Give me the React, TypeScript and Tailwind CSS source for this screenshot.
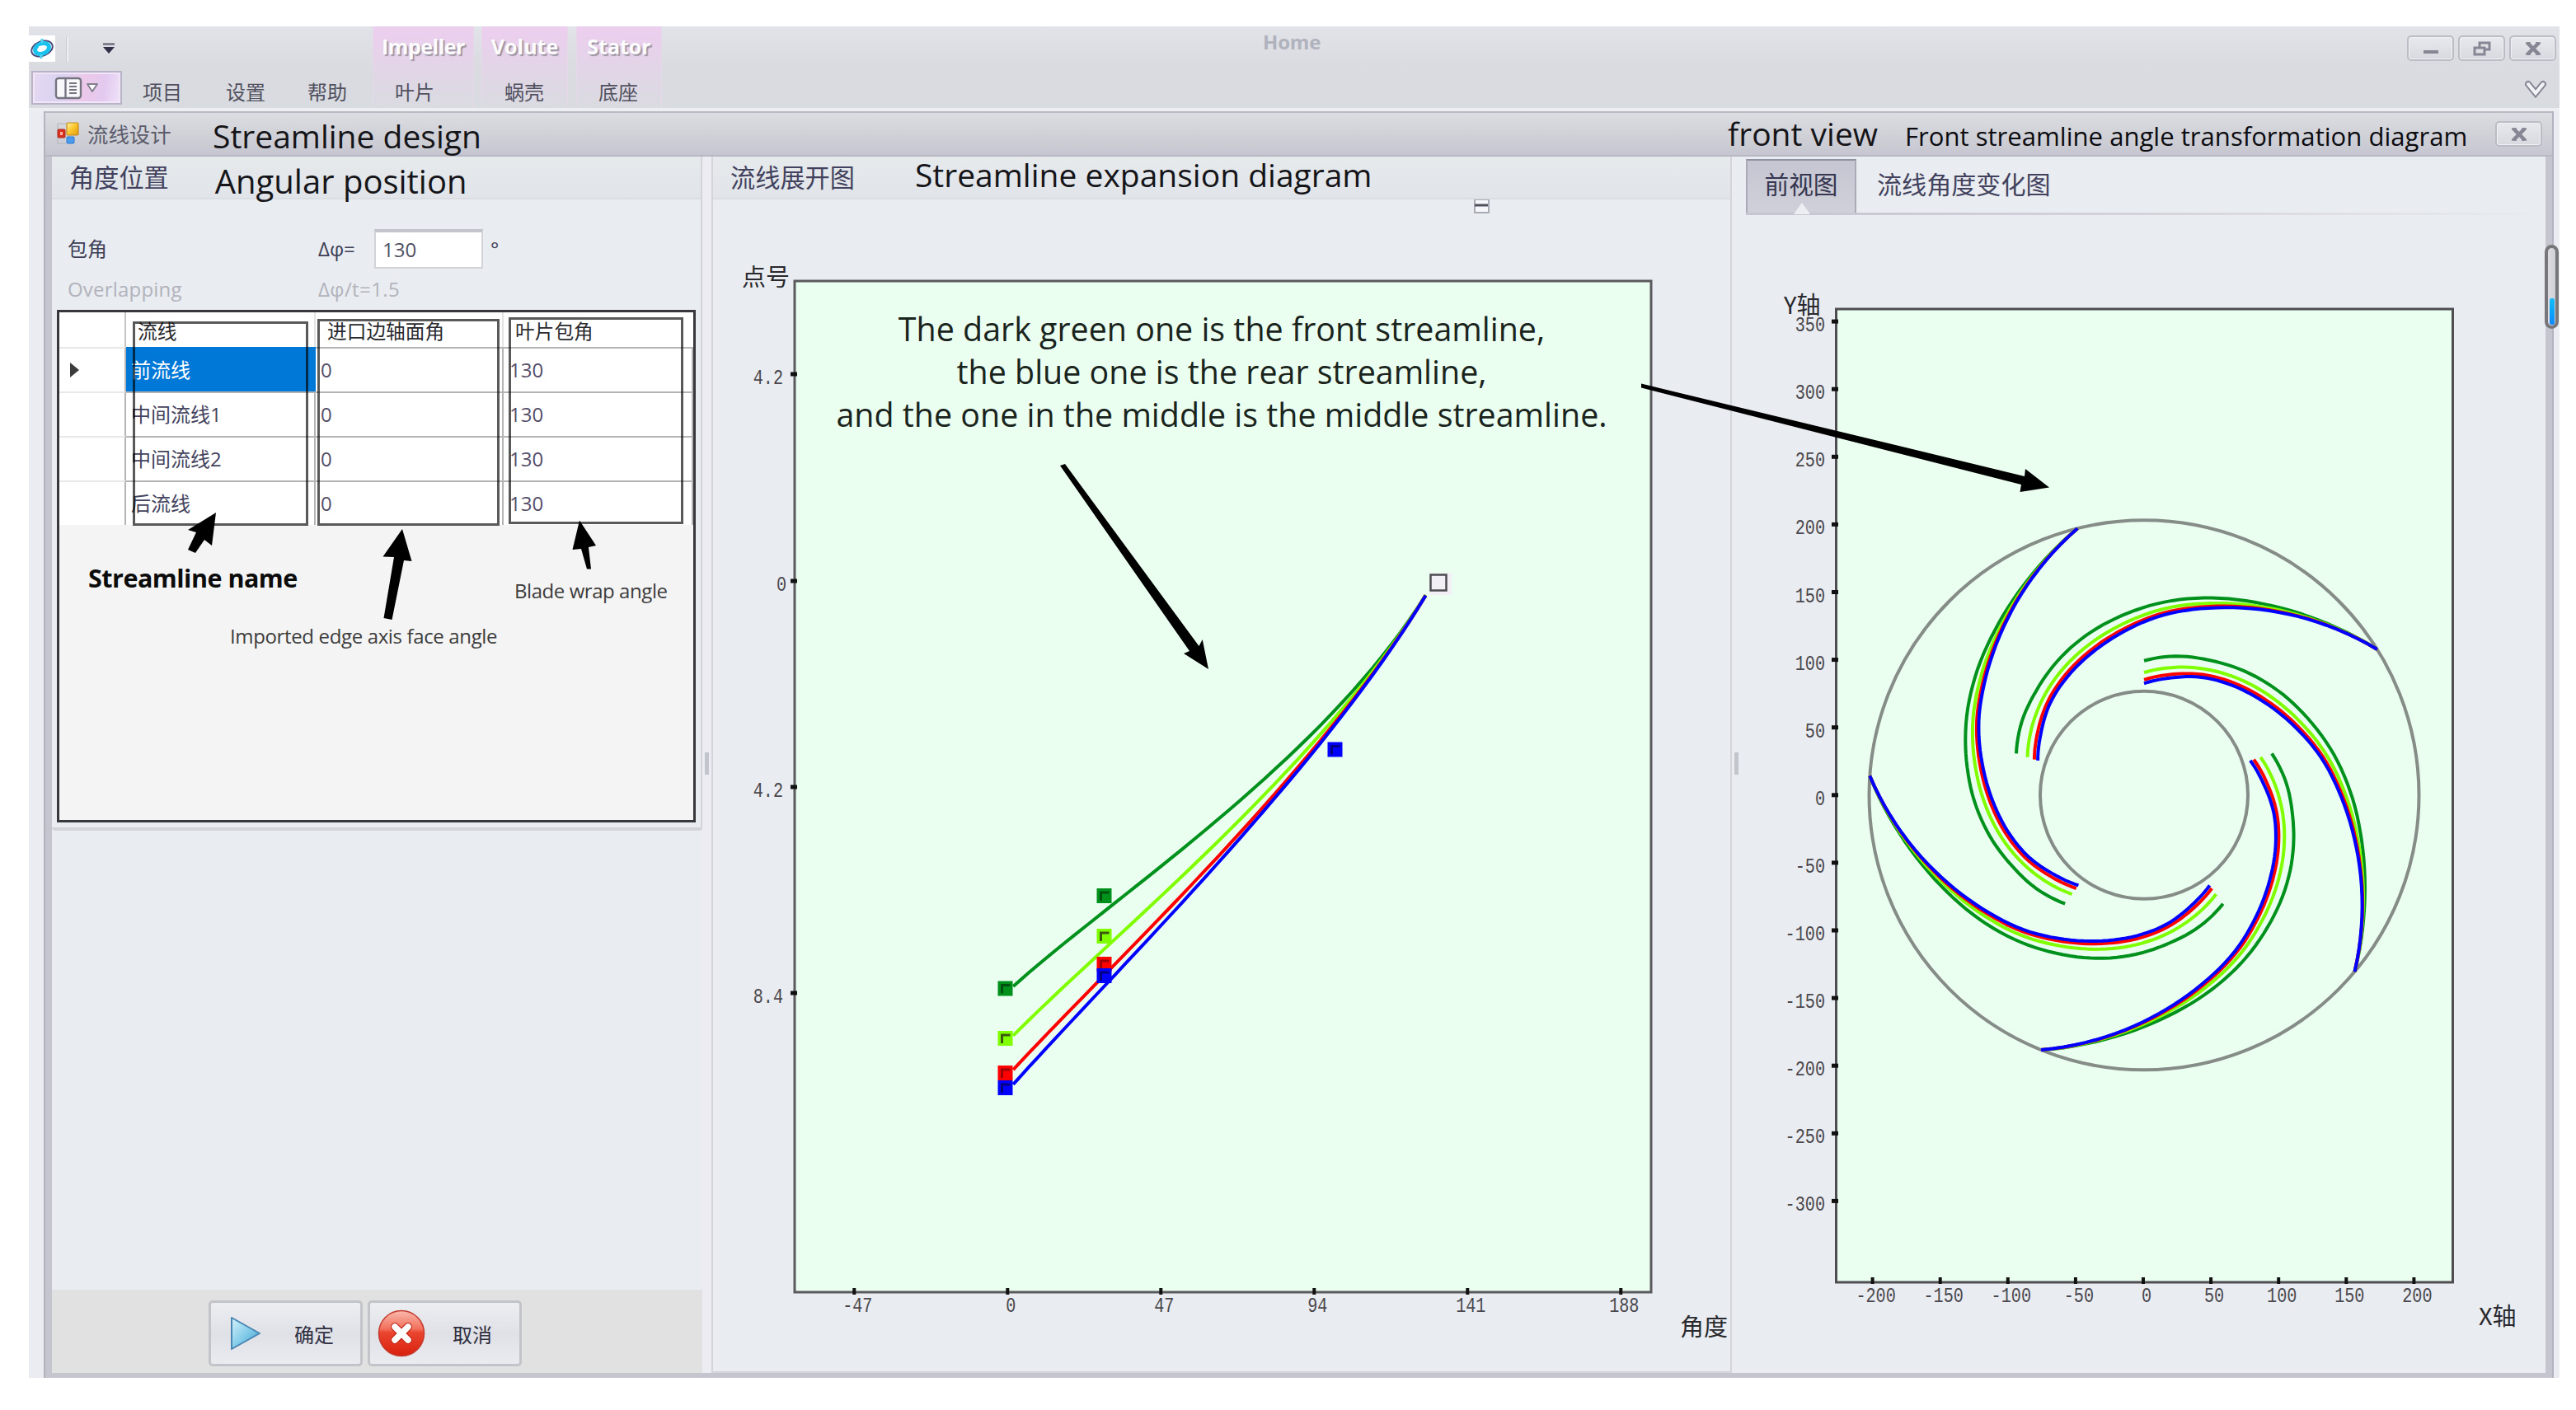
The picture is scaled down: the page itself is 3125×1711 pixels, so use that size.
import type { ReactNode } from 'react';

type Point = [number, number];

const menus = [
  { label: '项目', className: 'ml-[25px]' },
  { label: '设置', className: 'ml-[53px]' },
  { label: '帮助', className: 'ml-[51px]' },
];

const contextTabs = [
  { title: 'Impeller', label: '叶片', tab: 'w-[123px]', titleClass: 'w-[103px] tracking-[-0.5px]', text: 'pl-[26px]' },
  { title: 'Volute', label: '蜗壳', tab: 'ml-[9px] w-[105px]', titleClass: 'w-[85px]', text: 'pl-[27px]' },
  { title: 'Stator', label: '底座', tab: 'ml-[10px] w-[104px]', titleClass: 'w-[84px]', text: 'pl-[26px]' },
];

const rows = [
  { name: '前流线', inlet: '0', wrap: '130' },
  { name: '中间流线1', inlet: '0', wrap: '130' },
  { name: '中间流线2', inlet: '0', wrap: '130' },
  { name: '后流线', inlet: '0', wrap: '130' },
];

const DARK_GREEN = '#00901c';
const LIME = '#80ff00';
const RED = '#ff0000';
const BLUE = '#0000ff';

function WindowButton({ children, className = '' }: { children: ReactNode; className?: string }) {
  return (
    <div
      className={`flex h-[31px] w-[57px] items-center justify-center rounded-[5px] border-2 border-[#bbbcc6] bg-gradient-to-b from-[#e8e9ed] to-[#d8d9df] shadow-[inset_0_0_0_1px_#f0f0f4] ${className}`}
    >
      {children}
    </div>
  );
}

function CloseGlyph() {
  return (
    <svg width="20" height="16" viewBox="0 0 20 16">
      <path d="M3 1 L17 15 M17 1 L3 15" stroke="#858795" strokeWidth="4.5" />
      <path d="M1 1.2 H7 M13 1.2 H19 M1 14.8 H7 M13 14.8 H19" stroke="#858795" strokeWidth="2" />
    </svg>
  );
}

function AppLogo() {
  return (
    <svg width="30" height="26" viewBox="0 0 30 26">
      <g transform="rotate(-22 15 13)" fill="none">
        <ellipse cx="15" cy="13" rx="13.3" ry="8.8" stroke="#4a4a7c" strokeWidth="2" />
        <ellipse cx="15" cy="13" rx="8.8" ry="6" stroke="#19c3ee" strokeWidth="5" />
      </g>
      <path d="M15 1 V6 M14 20 V25" stroke="#4fd6f5" strokeWidth="3" />
      <path d="M11 10 L18 9 L19 15 L12 16 Z" fill="#ffffff" />
    </svg>
  );
}

function Ribbon() {
  return (
    <div className="flex h-[99px] bg-gradient-to-b from-[#e2e3e8] via-[#dadbe0] to-[#d8dbe0]">
      <div className="w-[417px]">
        <div className="flex h-[54px] items-start">
          <div className="mt-[11px] flex h-[32px] w-[32px] items-center justify-center bg-white">
            <AppLogo />
          </div>
          <div className="mt-[13px] ml-[13px] h-[30px] w-[3px] border-l border-[#c9cad1] bg-[#eeeff2]" />
          <svg className="mt-[20px] ml-[41px]" width="16" height="13" viewBox="0 0 16 13">
            <path d="M1 1.5 H15" stroke="#6f7081" strokeWidth="2.5" />
            <path d="M1 5 H15 L8 13 Z" fill="#30304a" />
          </svg>
        </div>
        <div className="flex h-[45px] items-start">
          <div className="ml-[3px] flex h-[41px] w-[110px] items-center justify-center gap-[4px] border-2 border-[#b8b3c8] bg-[linear-gradient(100deg,#e6d8f2_0%,#d9d3f1_30%,#ecc8ea_58%,#e3c9ef_80%,#f0e3fa_100%)] shadow-[inset_0_0_0_2px_#f0e6f8]">
            <svg width="34" height="28" viewBox="0 0 34 28">
              <rect x="2" y="2" width="30" height="24" rx="3" fill="#f8f8fa" stroke="#777482" strokeWidth="2.4" />
              <path d="M13.5 2 V26" stroke="#777482" strokeWidth="2.4" />
              <path d="M18 8 H27 M18 12 H27 M18 16 H27 M18 20 H27" stroke="#777482" strokeWidth="2" />
            </svg>
            <svg width="16" height="13" viewBox="0 0 16 13">
              <path d="M2 2 H14 L8 11 Z" fill="#ffffff" stroke="#85808f" strokeWidth="2" strokeLinejoin="round" />
            </svg>
          </div>
          <div className="flex pt-[14px] text-[24px] leading-none text-[#50505f]">
            {menus.map((menu) => (
              <span key={menu.label} className={menu.className}>
                {menu.label}
              </span>
            ))}
          </div>
        </div>
      </div>
      {contextTabs.map((tab) => (
        <div
          key={tab.title}
          className={`h-full shrink-0 border-x border-[#e5d8e8] bg-gradient-to-b from-[#ecceef] from-5% via-[#e0d6e5] via-60% to-[#dadbe1] ${tab.tab}`}
        >
          <div className="flex h-[54px] justify-center pt-[12px]">
            <span
              className={`text-center text-[25px] font-bold leading-none text-[#fcfbfd] [text-shadow:2px_2px_1px_#9b95a3] ${tab.titleClass}`}
            >
              {tab.title}
            </span>
          </div>
          <div className={`pt-[14px] text-[24px] leading-none text-[#50505f] ${tab.text}`}>{tab.label}</div>
        </div>
      ))}
      <div className="flex-1 pt-[7px] pl-[729px]">
        <span className="text-[24px] font-bold leading-none tracking-[-0.2px] text-[#b0b2bd]">Home</span>
      </div>
      <div className="w-[185px] pt-[11px]">
        <div className="flex gap-[5px]">
          <WindowButton>
            <div className="mt-[8px] h-[4px] w-[18px] bg-[#858795]" />
          </WindowButton>
          <WindowButton>
            <svg width="22" height="18" viewBox="0 0 22 18" fill="none" stroke="#858795" strokeWidth="3">
              <path d="M8 7 V2 H20 V10 H14" />
              <rect x="2" y="8" width="12" height="8" />
            </svg>
          </WindowButton>
          <WindowButton>
            <CloseGlyph />
          </WindowButton>
        </div>
        <svg className="mt-[23px] ml-[143px]" width="26" height="22" viewBox="0 0 26 22">
          <path d="M4 5 L13 16 L22 5" fill="none" stroke="#858795" strokeWidth="8" strokeLinecap="round" />
          <path d="M4 5 L13 16 L22 5" fill="none" stroke="#f3f4f7" strokeWidth="4" strokeLinecap="round" />
        </svg>
      </div>
    </div>
  );
}

function ChildTitleBar() {
  return (
    <div className="flex h-[55px] items-start bg-gradient-to-b from-[#dddee3] via-[#d1d2d8] to-[#c5c5d0] shadow-[inset_0_2px_0_#b9bac4,inset_0_-2px_0_#b7b7c3]">
      <svg className="mt-[13px] ml-[13px]" width="30" height="28" viewBox="0 0 30 28">
        <defs>
          <linearGradient id="yellow" x1="0" y1="0" x2="1" y2="1">
            <stop offset="0" stopColor="#fff3a0" />
            <stop offset="0.5" stopColor="#fcc52c" />
            <stop offset="1" stopColor="#e09a10" />
          </linearGradient>
        </defs>
        <path d="M2 2 H12 M2 2 V26 H12" stroke="#bdbdc4" strokeWidth="1.5" fill="none" />
        <rect x="13" y="1" width="14" height="15" rx="1.5" fill="url(#yellow)" stroke="#c48a1c" strokeWidth="1.2" />
        <rect x="2" y="9" width="9" height="10" rx="1" fill="#d8311f" stroke="#b02a1c" />
        <rect x="5" y="12" width="3" height="4" fill="#ffb0a0" />
        <rect x="13" y="18" width="9" height="8" rx="1" fill="#4a9cf0" stroke="#2f78cc" />
      </svg>
      <span className="mt-[16px] ml-[8px] w-[102px] text-[25.4px] leading-none whitespace-nowrap text-[#5b5b6c]">流线设计</span>
      <span className="mt-[10px] ml-[50px] text-[39px] leading-none text-[#151519]">Streamline design</span>
      <span className="mt-[7px] ml-auto text-[39px] leading-none text-[#151519]">front view</span>
      <span className="mt-[15px] ml-[33px] w-[681px] text-[31.1px] leading-none whitespace-nowrap text-[#0c0c10]">
        Front streamline angle transformation diagram
      </span>
      <WindowButton className="mt-[12px] mr-[12px] ml-[35px]">
        <CloseGlyph />
      </WindowButton>
    </div>
  );
}

function PanelHeader({ title, note, noteClass }: { title: string; note: string; noteClass: string }) {
  return (
    <div className="flex h-[52px] items-start border-b-2 border-[#dadde1] bg-gradient-to-b from-[#e6eaed] to-[#e1e4e8] pl-[21px]">
      <span className="mt-[11px] text-[30.2px] leading-none text-[#42425e]">{title}</span>
      <span className={`leading-none whitespace-nowrap text-[#151519] ${noteClass}`}>{note}</span>
    </div>
  );
}

function StreamlineTable() {
  return (
    <div className="mx-[6px] h-[622px] border-[3px] border-[#38383c] bg-[#f4f4f4] text-[24px] leading-none text-[#44445e]">
      <div className="flex h-[42px] bg-white text-[23.7px] text-[#2a2a2e]">
        <div className="w-[81px] border-r-2 border-[#c4c4c4]" />
        <div className="w-[230px] border-r-2 border-[#e4e4e4] pt-[12px] pl-[14px]">流线</div>
        <div className="w-[228px] border-r-2 border-[#e4e4e4] pt-[12px] pl-[14px]">进口边轴面角</div>
        <div className="flex-1 pt-[12px] pl-[14px]">叶片包角</div>
      </div>
      {rows.map((row, i) => (
        <div key={row.name} className="flex h-[54px] bg-white">
          <div className="flex w-[81px] items-center border-t-2 border-r-2 border-t-[#e8e8e8] border-r-[#b4b4b4] pl-[13px]">
            {i === 0 && (
              <svg width="11" height="18" viewBox="0 0 11 18">
                <path d="M0 0 L11 9 L0 18 Z" fill="#3c3c3c" />
              </svg>
            )}
          </div>
          <div
            className={`flex w-[230px] items-center border-t-2 border-r-2 pl-[6px] ${
              i === 0 ? 'border-[#0078d7] bg-[#0078d7] text-white' : 'border-[#b4b4b4]'
            }`}
          >
            {row.name}
          </div>
          <div className="flex w-[228px] items-center border-t-2 border-r-2 border-[#b4b4b4] pl-[6px] text-[#554e6a]">
            {row.inlet}
          </div>
          <div className="flex flex-1 items-center border-t-2 border-r-2 border-[#b4b4b4] pl-[7px] text-[#554e6a]">
            {row.wrap}
          </div>
        </div>
      ))}
    </div>
  );
}

function AnglePanel() {
  return (
    <div className="flex w-[790px] flex-col">
      <div className="h-[818px] rounded-b-[4px] border-r-2 border-b-[4px] border-[#d3d4da]">
        <PanelHeader title="角度位置" note="Angular position" noteClass="mt-[10px] ml-[56px] text-[40px]" />
        <div className="flex h-[84px] items-end text-[24px] leading-none text-[#3e3e56]">
          <div className="flex h-[48px] items-center">
            <span className="w-[322px] pl-[19px]">包角</span>
            <span className="w-[69px] pl-[1px]">Δφ=</span>
            <div className="flex h-full w-[132px] items-center border-2 border-t-[4px] border-[#d2d3d9] border-t-[#c4c5cc] bg-white pl-[8px] text-[#505062]">
              130
            </div>
            <span className="pl-[9px]">°</span>
          </div>
        </div>
        <div className="flex h-[50px] items-center text-[24px] leading-none text-[#b2b3bc]">
          <span className="w-[323px] pl-[19px] tracking-[0.2px]">Overlapping</span>
          <span className="tracking-[0.4px]">Δφ/t=1.5</span>
        </div>
        <StreamlineTable />
      </div>
      <div className="flex-1" />
      <div className="flex h-[101px] items-start gap-[6px] bg-[#e1e1e1] pt-[13px] pl-[190px]">
        <div className="flex h-[80px] w-[187px] items-center rounded-[5px] border-[3px] border-[#c3c4ca] bg-gradient-to-b from-[#edeef2] via-[#dfe1e7] to-[#e9ebef] pl-[23px] text-[24px] leading-none text-[#2e2e40]">
          <svg width="38" height="42" viewBox="0 0 38 42">
            <defs>
              <linearGradient id="play" x1="0" y1="0" x2="1" y2="1">
                <stop offset="0" stopColor="#d5f2fb" />
                <stop offset="0.5" stopColor="#86cdea" />
                <stop offset="1" stopColor="#3a9ccc" />
              </linearGradient>
            </defs>
            <path d="M2 2 L36 21 L2 40 Z" fill="url(#play)" stroke="#4a86b4" strokeWidth="2" strokeLinejoin="round" />
          </svg>
          <span className="mt-[3px] ml-[40px]">确定</span>
        </div>
        <div className="flex h-[80px] w-[187px] items-center rounded-[5px] border-[3px] border-[#c3c4ca] bg-gradient-to-b from-[#edeef2] via-[#dfe1e7] to-[#e9ebef] pl-[9px] text-[24px] leading-none text-[#2e2e40]">
          <svg width="58" height="60" viewBox="0 0 58 60">
            <defs>
              <linearGradient id="cancel" x1="0" y1="0" x2="0" y2="1">
                <stop offset="0" stopColor="#f9b9ac" />
                <stop offset="0.4" stopColor="#f2705c" />
                <stop offset="0.48" stopColor="#ea4530" />
                <stop offset="1" stopColor="#d8200e" />
              </linearGradient>
            </defs>
            <circle cx="29" cy="30" r="27.5" fill="url(#cancel)" stroke="#c43a2c" strokeWidth="1.5" />
            <path d="M21 22 L37 38 M37 22 L21 38" stroke="#c02818" strokeWidth="10" strokeLinecap="round" />
            <path d="M21 22 L37 38 M37 22 L21 38" stroke="#ffffff" strokeWidth="7.5" strokeLinecap="round" />
          </svg>
          <span className="mt-[3px] ml-[33px]">取消</span>
        </div>
      </div>
    </div>
  );
}

function AxisText({ x, y, text, anchor }: { x: number; y: number; text: string; anchor: 'middle' | 'end' }) {
  return (
    <text
      x={x}
      y={y}
      textAnchor={anchor}
      textLength={text.length * 12.1}
      lengthAdjust="spacingAndGlyphs"
      className="fill-[#4a484e] font-['Liberation_Mono',monospace] text-[25px]"
    >
      {text}
    </text>
  );
}

const axisTitle = "fill-[#2a2a2e] font-['Noto_Sans_CJK_SC',sans-serif] text-[29px]";

function toPath(points: Point[]) {
  return points.map(([x, y], i) => `${i === 0 ? 'M' : 'L'}${x.toFixed(1)} ${y.toFixed(1)}`).join(' ');
}

function bezier(p: Point[], from: number, to: number) {
  const out: Point[] = [];
  for (let i = 0; i <= 40; i++) {
    const t = from + ((to - from) * i) / 40;
    const s = 1 - t;
    const w = [s * s * s, 3 * s * s * t, 3 * s * t * t, t * t * t];
    out.push([
      w.reduce((sum, k, j) => sum + k * p[j][0], 0),
      w.reduce((sum, k, j) => sum + k * p[j][1], 0),
    ]);
  }
  return toPath(out);
}

const wraps = [
  { color: DARK_GREEN, dark: '#005010', start: 1199.5, mid: 1087 },
  { color: LIME, dark: '#3a5a10', start: 1260, mid: 1136 },
  { color: RED, dark: '#a00008', start: 1302, mid: 1170 },
  { color: BLUE, dark: '#000080', start: 1320, mid: 1184 },
];

function Knot({ x, y, color, dark }: { x: number; y: number; color: string; dark: string }) {
  return (
    <g>
      <rect x={x - 9} y={y - 9} width="18" height="18" fill={color} />
      <path d={`M${x - 4} ${y + 6} V${y - 4} H${x + 6}`} fill="none" stroke={dark} strokeWidth="3" />
    </g>
  );
}

function ExpansionChart() {
  return (
    <svg className="block" width="1234" height="1420" viewBox="865 242 1234 1420">
      <rect x="1789" y="242" width="17" height="16" fill="#f6f7fa" stroke="#a9abb5" strokeWidth="2" />
      <path d="M1789 249 H1805" stroke="#50505c" strokeWidth="3" />
      <rect x="964" y="341" width="1039" height="1227" fill="#eafff0" stroke="#5a5a5e" strokeWidth="3" />
      <text x="900" y="347" className={axisTitle}>点号</text>
      <text x="2038" y="1621" className={axisTitle}>角度</text>
      {[
        { y: 454, text: '4.2' },
        { y: 705, text: '0' },
        { y: 955, text: '4.2' },
        { y: 1205, text: '8.4' },
      ].map((tick) => (
        <g key={tick.y}>
          <path d={`M959 ${tick.y} H967`} stroke="#111111" strokeWidth="5" />
          <AxisText x={tick.text === '0' ? 954 : 950} y={tick.y + 12} text={tick.text} anchor="end" />
        </g>
      ))}
      {[-47, 0, 47, 94, 141, 188].map((value) => {
        const x = 1222.3 + (value / 47) * 186;
        return (
          <g key={value}>
            <path d={`M${x} 1563 V1571`} stroke="#111111" strokeWidth="4" />
            <AxisText x={x + 4} y={1592} text={String(value)} anchor="middle" />
          </g>
        );
      })}
      {wraps.map((wrap) => (
        <path
          key={wrap.color}
          d={bezier(
            [
              [1221, wrap.start + 5],
              [1340, wrap.mid + 6],
              [1625, 914],
              [1746, 694],
            ],
            0.022,
            0.957,
          )}
          fill="none"
          stroke={wrap.color}
          strokeWidth="4"
        />
      ))}
      {wraps.map((wrap) => (
        <g key={wrap.color}>
          <Knot x={1219.5} y={wrap.start} color={wrap.color} dark={wrap.dark} />
          <Knot x={1339.5} y={wrap.mid} color={wrap.color} dark={wrap.dark} />
        </g>
      ))}
      <Knot x={1619.5} y={909.5} color={BLUE} dark="#000080" />
      <rect x="1734" y="695" width="27" height="27" fill="#f2eff6" />
      <rect x="1735.5" y="697.5" width="19" height="19" fill="#f2eff6" stroke="#4c4c50" strokeWidth="2.5" />
    </svg>
  );
}

const CX = 2601;
const CY = 964.8;
const angles = [0, 13, 26, 39, 52, 65, 78, 91, 104, 117, 130];
const rearRadius = [135.5, 146, 159, 171, 184, 200, 219.5, 240, 265.5, 297, 333.5];
const frontRadius = [163, 173, 182, 193.5, 206, 219.5, 235.5, 253, 273.5, 300, 333.5];

// Catmull-Rom through the blade radii; ratio 0 is the rear streamline, 1 the front one
function bladePath(ratio: number, turn: number) {
  const radii = rearRadius.map((r, i) => r + (frontRadius[i] - r) * ratio);
  const last = radii.length - 1;
  const before = 2 * radii[0] - radii[1];
  const after = 2 * radii[last] - radii[last - 1] + 4;
  const points: Point[] = [];
  for (let i = 0; i < last; i++) {
    const a = i === 0 ? before : radii[i - 1];
    const b = radii[i];
    const c = radii[i + 1];
    const d = i + 2 > last ? after : radii[i + 2];
    for (let k = 0; k <= 6; k++) {
      const t = k / 6;
      const r =
        0.5 *
        (2 * b + (c - a) * t + (2 * a - 5 * b + 4 * c - d) * t * t + (3 * b - a - 3 * c + d) * t * t * t);
      const phi = ((90 - (angles[i] + 13 * t) + turn) * Math.PI) / 180;
      points.push([CX + r * Math.cos(phi), CY - r * Math.sin(phi)]);
    }
  }
  return toPath(points);
}

const streamlines = [
  { color: DARK_GREEN, ratio: 1 },
  { color: LIME, ratio: 0.48 },
  { color: RED, ratio: 0.16 },
  { color: BLUE, ratio: 0 },
];

function FrontViewChart() {
  return (
    <svg className="block" width="984" height="1400" viewBox="2104 261 984 1400">
      <rect x="2227.5" y="375" width="748" height="1181" fill="#eafff0" stroke="#4e4e52" strokeWidth="3" />
      <text x="2164" y="381" className={axisTitle}>Y轴</text>
      <text x="3007" y="1608" className={axisTitle}>X轴</text>
      {[350, 300, 250, 200, 150, 100, 50, 0, -50, -100, -150, -200, -250, -300].map((value) => {
        const y = CY - value * 1.642;
        return (
          <g key={value}>
            <path d={`M2222 ${y} H2230`} stroke="#111111" strokeWidth="5" />
            <AxisText x={2214} y={y + 12} text={String(value)} anchor="end" />
          </g>
        );
      })}
      {[-200, -150, -100, -50, 0, 50, 100, 150, 200].map((value) => {
        const x = 2600 + value * 1.642;
        return (
          <g key={value}>
            <path d={`M${x} 1550 V1558`} stroke="#111111" strokeWidth="4" />
            <AxisText x={x + 4} y={1580} text={String(value)} anchor="middle" />
          </g>
        );
      })}
      <circle cx={CX} cy={CY} r="333.5" fill="none" stroke="#868c88" strokeWidth="4" />
      <circle cx={CX} cy={CY} r="126" fill="none" stroke="#868c88" strokeWidth="4" />
      {[0, 72, 144, 216, 288].map((turn) => (
        <g key={turn}>
          {streamlines.map((line) => (
            <path key={line.color} d={bladePath(line.ratio, turn)} fill="none" stroke={line.color} strokeWidth="4" />
          ))}
        </g>
      ))}
    </svg>
  );
}

function Splitter() {
  return (
    <div className="flex w-[11px] shrink-0 justify-center bg-[#ececf2] pt-[723px]">
      <div className="h-[27px] w-[5px] bg-[#c3c5cc]" />
    </div>
  );
}

function ViewPanel() {
  return (
    <div className="flex flex-1 flex-col pt-[3px]">
      <div className="flex h-[65px] items-start pl-[14px]">
        <div className="relative flex h-[65px] w-[134px] justify-center border-2 border-b-0 border-[#a9a9b7] border-t-[#9091a2] bg-gradient-to-b from-[#c6c6d2] to-[#d0d0da] pt-[14px]">
          <span className="text-[29.7px] leading-none text-[#363650]">前视图</span>
          <svg className="absolute bottom-[-2px] left-[56px]" width="20" height="14" viewBox="0 0 20 14">
            <path d="M0 14 L10 0 L20 14 Z" fill="#eceef3" />
          </svg>
        </div>
        <span className="mt-[16px] ml-[25px] text-[30.1px] leading-none text-[#42425e]">流线角度变化图</span>
      </div>
      <div className="ml-[14px] h-[3px] bg-gradient-to-r from-[#c4c5cf] via-[#d3d4db] to-transparent" />
      <FrontViewChart />
    </div>
  );
}

function Annotations() {
  return (
    <div className="pointer-events-none absolute inset-0">
      <div className="absolute top-[390px] left-[161px] h-[248px] w-[213px] border-[3px] border-black/65" />
      <div className="absolute top-[387px] left-[385px] h-[251px] w-[221px] border-[3px] border-black/65" />
      <div className="absolute top-[385px] left-[617px] h-[251px] w-[212px] border-[3px] border-black/65" />
      <span className="absolute top-[686px] left-[107px] text-[30.5px] font-bold leading-none tracking-[-0.5px] whitespace-nowrap text-[#0c0c0c]">
        Streamline name
      </span>
      <span className="absolute top-[760px] left-[279px] text-[24px] leading-none tracking-[-0.36px] whitespace-nowrap text-[#3c3c3c]">
        Imported edge axis face angle
      </span>
      <span className="absolute top-[705px] left-[624px] text-[24px] leading-none tracking-[-0.44px] whitespace-nowrap text-[#3c3c3c]">
        Blade wrap angle
      </span>
      <div className="absolute top-[373px] left-[977px] w-[1010px] text-center text-[39.4px] leading-[52px] whitespace-nowrap text-[#1a241d]">
        <p>The dark green one is the front streamline,</p>
        <p>the blue one is the rear streamline,</p>
        <p>and the one in the middle is the middle streamline.</p>
      </div>
      <svg className="absolute inset-0" width="3125" height="1711" viewBox="0 0 3125 1711" fill="#000000">
        <path d="M262 622 L257 662 L248 655 L237 671 L228 667 L238 646 L228 643 Z" />
        <path d="M488 642 L499.5 681 L490 680 L475.5 752 L465.5 750 L478 676 L464.5 675.5 Z" />
        <path d="M703 631.5 L723 662 L714 664 L717 690.5 L712 690.5 L705 666 L694.5 667 Z" />
        <path d="M1466 812 L1458.7 776 L1454.5 784 L1292 563 L1286 565 L1443 790 L1436 793 Z" />
        <path d="M2486 591.6 L2457 569 L2456 578 L1991 465.5 L1991 470.5 L2452 588 L2450.5 597 Z" />
      </svg>
      <div className="absolute top-[297px] left-[3087px] flex h-[102px] w-[17px] items-end justify-center rounded-full border-[4px] border-[#77777b] bg-gradient-to-r from-[#dcdce2] to-[#cfcfd6] pb-[1px]">
        <div className="h-[32px] w-[6px] rounded-[2px] bg-gradient-to-b from-[#16bdf8] to-[#1088ff]" />
      </div>
    </div>
  );
}

export default function App() {
  return (
    <div className="relative h-[1711px] w-[3125px] overflow-hidden bg-white pt-[32px] pl-[35px] font-['Open_Sans','Noto_Sans_CJK_SC',sans-serif]">
      <div className="flex h-[1640px] w-[3070px] flex-col">
        <Ribbon />
        <div className="h-[4px] bg-[#edeef2]" />
        <div className="flex flex-1 bg-[#ebecf1]">
          <div className="w-[18px]" />
          <div className="flex w-[3045px] flex-col border-x-2 border-[#b3b3c0]">
            <ChildTitleBar />
            <div className="flex flex-1 border-r-[8px] border-b-[6px] border-l-[8px] border-[#c5c5d0] bg-[#e9ecf0]">
              <AnglePanel />
              <Splitter />
              <div className="w-[1238px] shrink-0 border-2 border-t-0 border-[#d3d5db]">
                <PanelHeader
                  title="流线展开图"
                  note="Streamline expansion diagram"
                  noteClass="mt-[2px] ml-[73px] text-[39px]"
                />
                <ExpansionChart />
              </div>
              <div className="w-[3px] pt-[723px]">
                <div className="ml-[3px] h-[27px] w-[5px] bg-[#c3c5cc]" />
              </div>
              <ViewPanel />
            </div>
          </div>
        </div>
      </div>
      <Annotations />
    </div>
  );
}
